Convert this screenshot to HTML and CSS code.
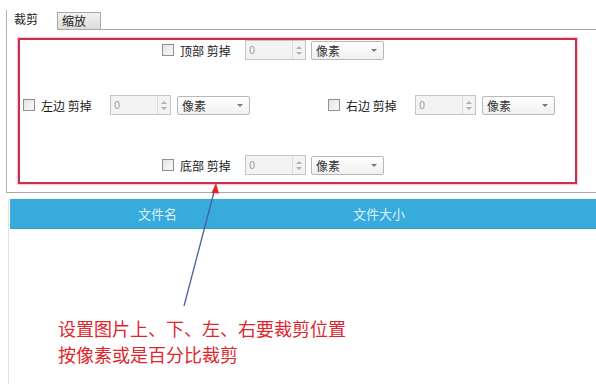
FILE: index.html
```html
<!DOCTYPE html>
<html lang="zh-CN">
<head>
<meta charset="utf-8">
<title>裁剪</title>
<link rel="stylesheet" href="styles.css">
</head>
<body>
<div class="page">
  <div class="tabs">
    <div class="tab tab-active">裁剪</div>
    <div class="tab tab-idle">缩放</div>
    <div class="tab-fill"></div>
  </div>
  <div class="panel">
    <div class="cropbox">
      <div class="row row-top">
        <div class="group">
          <span class="chk"></span><span class="lbl">顶部 剪掉</span>
          <span class="spin"><span class="val">0</span><span class="btns"><i class="up"></i><i class="dn"></i></span></span>
          <span class="sel"><span>像素</span><i class="caret"></i></span>
        </div>
      </div>
      <div class="row row-mid">
        <div class="group">
          <span class="chk"></span><span class="lbl">左边 剪掉</span>
          <span class="spin"><span class="val">0</span><span class="btns"><i class="up"></i><i class="dn"></i></span></span>
          <span class="sel"><span>像素</span><i class="caret"></i></span>
        </div>
        <div class="group group-right">
          <span class="chk"></span><span class="lbl">右边 剪掉</span>
          <span class="spin"><span class="val">0</span><span class="btns"><i class="up"></i><i class="dn"></i></span></span>
          <span class="sel"><span>像素</span><i class="caret"></i></span>
        </div>
      </div>
      <div class="row row-bot">
        <div class="group">
          <span class="chk"></span><span class="lbl">底部 剪掉</span>
          <span class="spin"><span class="val">0</span><span class="btns"><i class="up"></i><i class="dn"></i></span></span>
          <span class="sel"><span>像素</span><i class="caret"></i></span>
        </div>
      </div>
    </div>
  </div>
  <div class="list">
    <div class="list-head">
      <span class="col col-name">文件名</span>
      <span class="col col-size">文件大小</span>
    </div>
    <div class="list-body">
      <p class="note">设置图片上、下、左、右要裁剪位置<br>按像素或是百分比裁剪</p>
    </div>
  </div>
  <svg class="arrow" width="596" height="384" viewBox="0 0 596 384">
    <line x1="184" y1="306" x2="214" y2="192" stroke="#4d5d9a" stroke-width="1.3"/>
    <polygon points="216,183 211.5,193 219,193.5" fill="#e3262a"/>
  </svg>
</div>
</body>
</html>
```

FILE: styles.css
```css
* { box-sizing: border-box; }
html, body { margin: 0; padding: 0; background: #fff; }
body {
  font-family: "Noto Sans CJK SC", "Noto Sans", sans-serif;
  font-size: 12px;
  color: #222;
}
.page {
  position: relative;
  width: 596px;
  height: 384px;
  overflow: hidden;
}
.tabs {
  display: flex;
  height: 30px;
  padding-top: 10px;
  margin-left: 6px;
}
.tab {
  height: 20px;
  line-height: 18px;
}
.tab-active {
  width: 51px;
  border-left: 1px solid #b4b4b4;
  padding-left: 7px;
}
.tab-idle {
  width: 44px;
  margin-top: 2px;
  height: 18px;
  line-height: 15px;
  padding-left: 4px;
  border: 1px solid #a8a8a8;
  background: linear-gradient(#f2f2f2, #dcdcdc);
}
.tab-fill {
  flex: 1;
  border-bottom: 1px solid #a8a8a8;
}
.panel {
  margin-left: 6px;
  border-left: 1px solid #b4b4b4;
  border-bottom: 1px solid #a8a8a8;
  padding: 8px 13px 8px 11px;
}
.cropbox {
  width: 559px;
  height: 146px;
  border: 2px solid #c9304c;
  box-shadow: 0 0 1px 1px rgba(240, 150, 170, 0.5);
  display: flex;
  flex-direction: column;
}
.row {
  display: flex;
  height: 20px;
}
.row-top { padding-left: 142px; }
.row-mid { margin-top: 35px; padding-left: 3px; }
.row-bot { margin-top: 40px; padding-left: 142px; }
.group {
  display: flex;
  align-items: center;
}
.group-right { margin-left: 78px; }
.chk {
  width: 12px;
  height: 12px;
  border: 1px solid #8e8f8f;
  background: linear-gradient(135deg, #e4e4e4, #fafafa);
  margin-right: 6px;
}
.lbl {
  width: 56px;
  white-space: nowrap;
  color: #1a1a1a;
}
.row-mid .lbl { width: 60px; }
.spin {
  display: flex;
  margin-left: 9px;
  width: 61px;
  height: 20px;
  border: 1px solid #c4c4c4;
  background: #f3f3f3;
}
.val {
  flex: 1;
  padding-left: 3px;
  line-height: 17px;
  color: #a0a0a0;
  font-size: 11px;
}
.btns {
  width: 13px;
  border-left: 1px solid #dcdcdc;
  display: flex;
  flex-direction: column;
  align-items: center;
  justify-content: center;
  gap: 3px;
}
.up, .dn {
  width: 0;
  height: 0;
  border-left: 3px solid transparent;
  border-right: 3px solid transparent;
}
.up { border-bottom: 3px solid #b0b0b0; }
.dn { border-top: 3px solid #b0b0b0; }
.sel {
  display: flex;
  align-items: center;
  justify-content: space-between;
  margin-left: 5px;
  width: 73px;
  height: 19px;
  padding: 0 6px 0 4px;
  border: 1px solid #b8b8b8;
  border-radius: 2px;
  background: linear-gradient(#ffffff, #f0f0f0);
  color: #333;
}
.row-mid .sel { margin-left: 6px; }
.caret {
  width: 0;
  height: 0;
  border-left: 3px solid transparent;
  border-right: 3px solid transparent;
  border-top: 3px solid #777;
}
.list {
  margin-top: 6px;
  margin-left: 8px;
  border-left: 1px solid #e2e2e2;
  height: 200px;
}
.list-head {
  margin-left: 1px;
  height: 30px;
  background: #36abdc;
  border-bottom: 1px solid #2aa7b4;
  display: flex;
  align-items: center;
  color: #dff1fa;
  font-size: 13px;
}
.col-name { margin-left: 128px; }
.col-size { margin-left: 176px; }
.list-body {
  padding-top: 86px;
}
.note {
  margin: 0 0 0 49px;
  font-size: 18px;
  line-height: 26px;
  color: #e0262c;
}
.arrow {
  position: absolute;
  left: 0;
  top: 0;
  pointer-events: none;
}
```
